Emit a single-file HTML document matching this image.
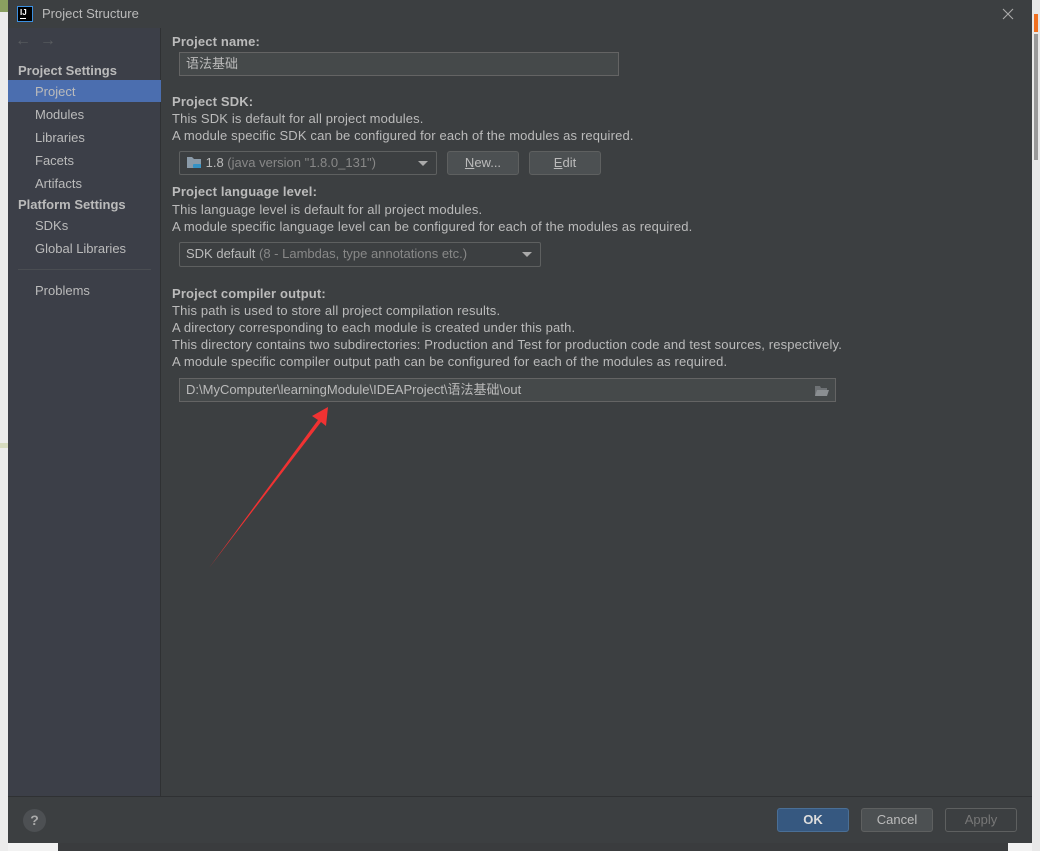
<!DOCTYPE html>
<html><head><meta charset="utf-8"><style>
*{margin:0;padding:0;box-sizing:border-box}
body{width:1040px;height:851px;overflow:hidden;background:#f2f2f2;position:relative;font-family:"Liberation Sans","Noto Sans CJK SC",sans-serif;font-size:13px;color:#bbbbbb}
.abs{position:absolute}
#dlg{left:8px;top:0;width:1024px;height:843px;background:#3c3f41}
#side{left:8px;top:28px;width:153px;height:768px;background:#3c3f48;border-right:1px solid #2f3133}
.si{position:absolute;left:27px;font-size:13px;color:#bbbbbb}
.sh{position:absolute;left:10px;font-weight:bold;color:#bbbbbb}
.t{position:absolute;left:172px;white-space:nowrap;letter-spacing:0.15px}
.b{font-weight:bold}
.field{position:absolute;background:#45494a;border:1px solid #646464;color:#bbbbbb;padding-left:6px;line-height:22px}
.combo{position:absolute;background:#3c3f41;border:1px solid #5e6060;border-radius:2px;line-height:22px;padding-left:6px}
.btn{position:absolute;background:#4c5052;border:1px solid #5e6060;border-radius:3px;text-align:center;line-height:22px;color:#bbbbbb}
.caret{position:absolute;right:8px;top:9px;width:0;height:0;border-left:5px solid transparent;border-right:5px solid transparent;border-top:5px solid #aaa}
.dim{color:#888}
</style></head><body>
<div class="abs" style="left:0;top:0;width:8px;height:851px;background:#ececec"></div>
<div class="abs" style="left:0;top:0;width:8px;height:12px;background:#8aa060"></div>
<div class="abs" style="left:0;top:443px;width:8px;height:5px;background:#d7dcc0"></div>
<div class="abs" style="left:1032px;top:0;width:8px;height:851px;background:#e8e8e8"></div>
<div class="abs" style="left:1034px;top:14px;width:4px;height:18px;background:#f07020"></div>
<div class="abs" style="left:1034px;top:34px;width:4px;height:126px;background:#999"></div>
<div class="abs" style="left:58px;top:843px;width:950px;height:8px;background:#3a3c3e"></div>
<div id="dlg" class="abs"></div>
<div class="abs" style="left:17px;top:6px;width:16px;height:16px;border:1px solid #3b8fe0;background:#000"><div style="color:#fff;font-size:8px;font-weight:bold;position:absolute;left:2px;top:1px">IJ</div><div style="position:absolute;left:2px;top:11px;width:6px;height:1px;background:#fff"></div></div>
<div class="abs" style="left:42px;top:6px;font-size:13px;color:#bbbbbb">Project Structure</div>
<svg class="abs" style="left:1002px;top:8px" width="12" height="12"><path d="M1 1L11 11M11 1L1 11" stroke="#aaa" stroke-width="1.1"/></svg>
<div id="side" class="abs"></div>
<div class="abs" style="left:15px;top:32px;color:#5a5d60;font-size:16px">←&nbsp;&nbsp;→</div>
<div class="sh abs" style="left:18px;top:63px">Project Settings</div>
<div class="abs" style="left:8px;top:80px;width:153px;height:22px;background:#4b6eaf"></div>
<div class="si" style="left:35px;top:84px">Project</div>
<div class="si" style="left:35px;top:107px">Modules</div>
<div class="si" style="left:35px;top:130px">Libraries</div>
<div class="si" style="left:35px;top:153px">Facets</div>
<div class="si" style="left:35px;top:176px">Artifacts</div>
<div class="sh abs" style="left:18px;top:197px">Platform Settings</div>
<div class="si" style="left:35px;top:218px">SDKs</div>
<div class="si" style="left:35px;top:241px">Global Libraries</div>
<div class="abs" style="left:18px;top:269px;width:133px;height:1px;background:#4a4d52"></div>
<div class="si" style="left:35px;top:283px">Problems</div>
<div class="t b" style="top:34px">Project name:</div>
<div class="field" style="left:179px;top:52px;width:440px;height:24px">语法基础</div>
<div class="t b" style="top:94px">Project SDK:</div>
<div class="t" style="top:111px">This SDK is default for all project modules.</div>
<div class="t" style="top:128px">A module specific SDK can be configured for each of the modules as required.</div>
<div class="combo" style="left:179px;top:151px;width:258px;height:24px"><svg width="16" height="14" style="vertical-align:-2px"><path d="M1 2h5l2 2h7v9H1z" fill="#8a9aa8"/><rect x="7" y="9" width="8" height="4" rx="1" fill="#3592c4"/></svg> 1.8 <span class="dim">(java version "1.8.0_131")</span><div class="caret"></div></div>
<div class="btn" style="left:447px;top:151px;width:72px;height:24px"><u>N</u>ew...</div>
<div class="btn" style="left:529px;top:151px;width:72px;height:24px"><u>E</u>dit</div>
<div class="t b" style="top:184px">Project language level:</div>
<div class="t" style="top:202px">This language level is default for all project modules.</div>
<div class="t" style="top:219px">A module specific language level can be configured for each of the modules as required.</div>
<div class="combo" style="left:179px;top:242px;width:362px;height:25px">SDK default <span class="dim">(8 - Lambdas, type annotations etc.)</span><div class="caret"></div></div>
<div class="t b" style="top:286px">Project compiler output:</div>
<div class="t" style="top:303px">This path is used to store all project compilation results.</div>
<div class="t" style="top:320px">A directory corresponding to each module is created under this path.</div>
<div class="t" style="top:337px">This directory contains two subdirectories: Production and Test for production code and test sources, respectively.</div>
<div class="t" style="top:354px">A module specific compiler output path can be configured for each of the modules as required.</div>
<div class="field" style="left:179px;top:378px;width:657px;height:24px">D:\MyComputer\learningModule\IDEAProject\语法基础\out
<svg width="16" height="12" style="position:absolute;right:5px;top:6px"><path d="M1 1h5l1 2h6v8H1z" fill="#6e7275"/><path d="M3 5h12l-2 6H1z" fill="#8a8e91"/></svg></div>
<svg class="abs" style="left:0;top:0" width="1040" height="851"><path d="M209 568 L318 420 L312 416 L328 407 L326 426 L321 422 Z" fill="#f03232"/></svg>
<div class="abs" style="left:8px;top:796px;width:1024px;height:1px;background:#2f3133"></div>
<div class="abs" style="left:23px;top:809px;width:23px;height:23px;border-radius:50%;background:#4d5053;color:#aaa;text-align:center;line-height:23px;font-size:14px;font-weight:bold">?</div>
<div class="btn" style="left:777px;top:808px;width:72px;height:24px;background:#365880;border-color:#4a6f96;font-weight:bold;color:#ddd">OK</div>
<div class="btn" style="left:861px;top:808px;width:72px;height:24px">Cancel</div>
<div class="btn" style="left:945px;top:808px;width:72px;height:24px;background:#3c3f41;color:#777">Apply</div>
</body></html>
